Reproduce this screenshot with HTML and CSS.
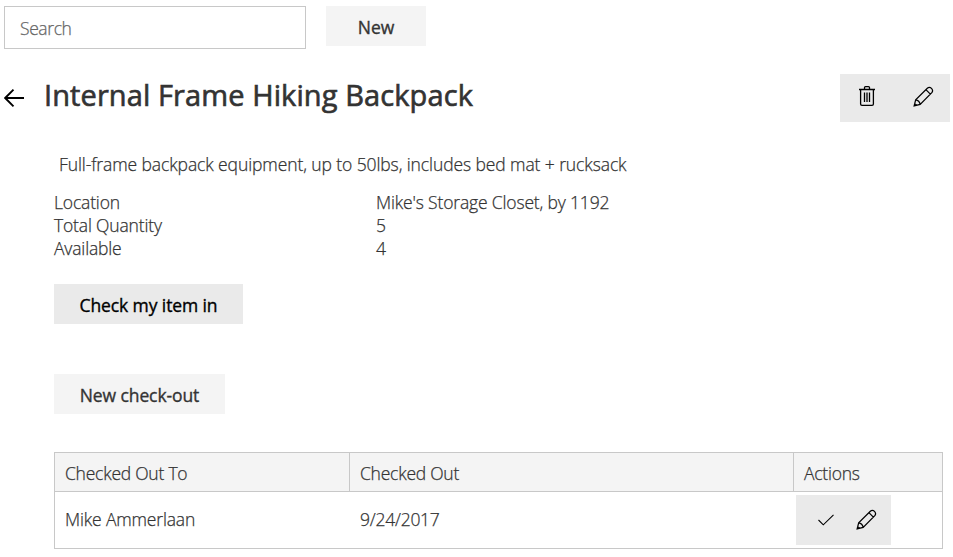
FILE: index.html
```html
<!DOCTYPE html>
<html lang="en">
<head>
<meta charset="utf-8">
<title>Inventory</title>
<link rel="stylesheet" href="styles.css">
</head>
<body>
<svg class="sprites" aria-hidden="true">
  <symbol id="pencil" viewBox="0 0 22 22">
    <path d="M1.2 20.8 2.8 14.5 15 2.3Q17.2.5 19.4 2.5 21.5 4.8 19.7 7L7.5 19.2ZM2.8 14.5Q6.7 15.2 7.5 19.2M13.5 3.8 18.2 8.5M1.5 18.2 3.8 20.2"/>
  </symbol>
</svg>
<div class="toolbar">
  <input class="search" type="text" placeholder="Search">
  <button class="btn btn-new">New</button>
</div>
<header class="title-row">
  <svg class="back" viewBox="0 0 20 18"><path d="M20 9H1M9.5 .7 1.2 9l8.3 8.3"/></svg>
  <h1>Internal Frame Hiking Backpack</h1>
  <div class="actions">
    <svg class="trash" viewBox="0 0 16 20"><path d="M0 3.5H16M5.5 3V1.6Q5.5 .7 6.5 .7H9.5Q10.5 .7 10.5 1.6V3M1.6 3.5V18Q1.6 19.3 3 19.3H13Q14.4 19.3 14.4 18V3.5M5.5 6.5V16M8 6.5V16M10.5 6.5V16"/></svg>
    <svg class="pencil"><use href="#pencil"/></svg>
  </div>
</header>
<main>
  <p class="description">Full-frame backpack equipment, up to 50lbs, includes bed mat + rucksack</p>
  <dl class="facts">
    <dt>Location</dt><dd>Mike's Storage Closet, by 1192</dd>
    <dt>Total Quantity</dt><dd>5</dd>
    <dt>Available</dt><dd>4</dd>
  </dl>
  <button class="btn btn-in">Check my item in</button>
  <button class="btn btn-out">New check-out</button>
  <div class="table">
    <div class="row head"><div>Checked Out To</div><div>Checked Out</div><div>Actions</div></div>
    <div class="row">
      <div>Mike Ammerlaan</div><div class="date">9/24/2017</div>
      <div class="row-actions">
        <svg class="check" viewBox="0 0 16 12"><path d="M.5 6 5.3 10.8 15.5 .8"/></svg>
        <svg class="pencil"><use href="#pencil"/></svg>
      </div>
    </div>
  </div>
</main>
</body>
</html>
```
FILE: styles.css
```css
* { box-sizing: border-box; }
body { margin: 0; padding: 6px 3px 0 4px; background: #fff; color: #333; font: 300 17.5px/23px "Open Sans", "Noto Sans", sans-serif; letter-spacing: -0.16px; -webkit-text-stroke: 0.25px; }
svg { display: block; fill: none; stroke: #000; stroke-width: 1.3; }
.sprites { position: absolute; width: 0; height: 0; }
.toolbar { display: flex; align-items: flex-start; gap: 20px; height: 43px; }
.search { width: 302px; height: 43px; padding: 1px 15px 0; border: 1px solid #c8c8c8; font: inherit; letter-spacing: -0.4px; }
.search::placeholder { color: #666; opacity: 1; }
.btn { display: block; height: 40px; padding: 3px 0 0; border: 0; color: #333; background: #f4f4f4; font: 400 17.5px/23px "Open Sans", sans-serif; letter-spacing: -0.1px; -webkit-text-stroke: 0.35px; }
.btn-new { width: 100px; }
.title-row { display: flex; margin-top: 25px; height: 48px; }
.back { width: 20px; height: 18px; margin-top: 15px; stroke-width: 1.9; }
h1 { margin: 0 0 0 20px; font: 400 29px/42px "Open Sans", sans-serif; letter-spacing: 0.1px; -webkit-text-stroke: 0.65px; }
.actions { display: flex; gap: 38px; width: 110px; height: 48px; margin-left: auto; padding: 12px 0 0 19px; background: #eaeaea; }
.trash { width: 16px; height: 20px; }
.pencil { width: 21px; height: 21px; }
main { padding: 31px 7px 0 50px; }
.description { margin: 0; padding-left: 5px; letter-spacing: -0.1px; }
.facts { display: grid; grid-template-columns: 322px 1fr; margin: 15px 0 24px; }
.facts dd { margin: 0; }
.btn-in { width: 189px; background: #eaeaea; color: #000; }
.btn-out { width: 171px; margin-top: 50px; }
.table { margin-top: 38px; height: 97px; border: 1px solid #c8c8c8; }
.row { display: grid; grid-template-columns: 294px 444px 1fr; height: 56px; line-height: 54px; }
.row > div { padding-left: 10px; }
.head { height: 39px; line-height: 38px; background: #f4f4f4; border-bottom: 1px solid #c8c8c8; letter-spacing: -0.24px; }
.head > div { padding-top: 1px; height: 38px; }
.head > div + div { border-left: 1px solid #c8c8c8; }
.row > .date { padding-left: 11px; letter-spacing: -0.25px; }
.row > .row-actions { display: flex; gap: 22px; width: 95px; height: 50px; margin: 3px 0 0 3px; padding: 14px 0 0 22px; background: #eaeaea; }
.check { width: 16px; height: 12px; margin-top: 5px; stroke-width: 1.1; }
```
